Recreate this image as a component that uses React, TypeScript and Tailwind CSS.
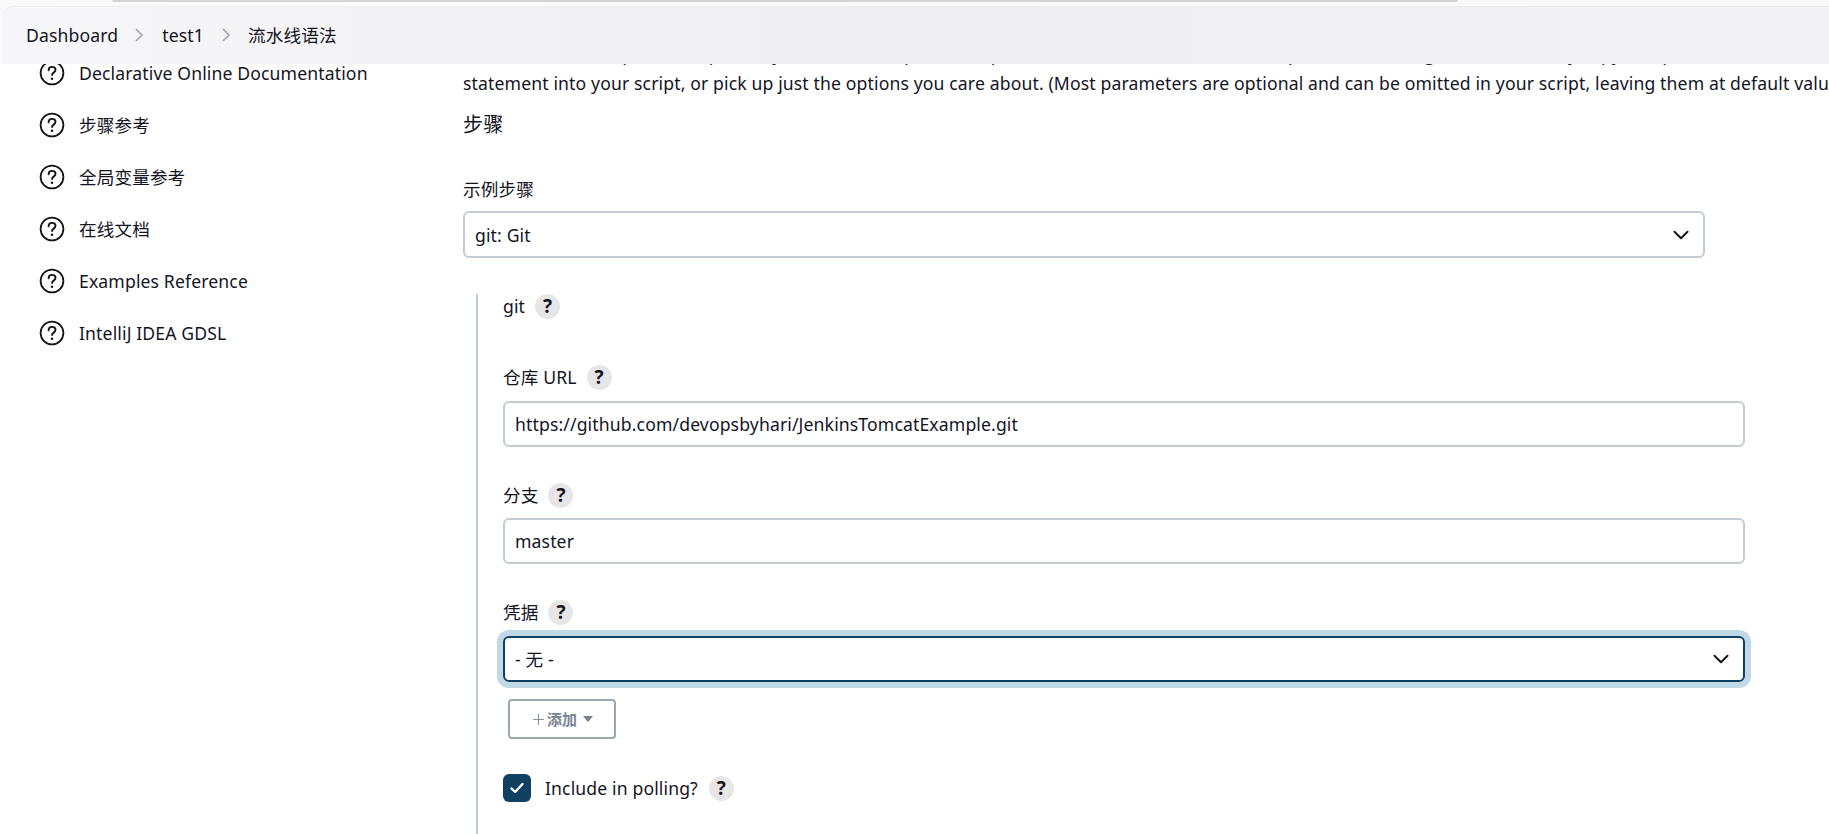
import React from "react";

const FONT = "font-['Noto_Sans','Noto_Sans_CJK_SC',sans-serif]";

function HelpCircle() {
  return (
    <svg width="26" height="26" viewBox="0 0 26 26" className="shrink-0">
      <circle cx="13" cy="13" r="11.4" fill="none" stroke="#14141f" strokeWidth="1.8" />
      <path d="M9.6 10.2c.1-2 1.5-3.3 3.5-3.3s3.4 1.2 3.4 2.9c0 1.4-.8 2.1-1.8 2.8-1 .7-1.6 1.2-1.6 2.5" fill="none" stroke="#14141f" strokeWidth="1.9" strokeLinecap="round" />
      <circle cx="13" cy="18.8" r="1.25" fill="#14141f" />
    </svg>
  );
}

function Badge() {
  return (
    <span className="w-[25px] h-[25px] rounded-full bg-[#e6e6e6] flex items-center justify-center shrink-0 text-[19px] leading-none font-bold text-[#14141f] tracking-normal">
      ?
    </span>
  );
}

function Chevron() {
  return (
    <svg width="16" height="16" viewBox="0 0 16 16">
      <path d="M1.5 4.5 8 11l6.5-6.5" fill="none" stroke="#14141f" strokeWidth="2" strokeLinecap="round" strokeLinejoin="round" transform="translate(0 .2)" />
    </svg>
  );
}

function Crumb() {
  return (
    <svg width="8" height="14" viewBox="0 0 8 14" className="shrink-0 block">
      <path d="M1 1 7 7l-6 6" fill="none" stroke="#a9a9b6" strokeWidth="1.7" />
    </svg>
  );
}

const sideItems = ["Declarative Online Documentation", "步骤参考", "全局变量参考", "在线文档", "Examples Reference", "IntelliJ IDEA GDSL"];

function FieldLabel({ text }: { text: string }) {
  return (
    <div className="flex items-center gap-[10px] h-[25px]">
      <span>{text}</span>
      <Badge />
    </div>
  );
}

function TextBox({ value, top }: { value: string; top: string }) {
  return (
    <div className={`${top} h-[46px] rounded-[6px] border-2 border-[#c3ccd1] flex items-center px-[10px]`}>
      {value}
    </div>
  );
}

export default function App() {
  return (
    <div className={`${FONT} relative h-[834px] w-full overflow-hidden bg-white text-[#14141f] text-[17.6px] tracking-[0.13px]`}>
      {/* sticky breadcrumb bar */}
      <div className="absolute inset-x-0 top-0 z-10 h-[64px] bg-[#f9f9f9]">
        <div className="absolute left-[112px] top-0 h-[2px] w-[1346px] rounded-b-[6px] bg-[#d5d5d5]" />
        <div className="absolute right-0 left-[3px] top-[6px] bottom-0 rounded-tl-[10px] border-t border-[#ececec] bg-gradient-to-r from-[#f7f7f9] via-[#eeeef1] to-[#f3f3f5] flex items-center pl-[23px] pb-[1px]">
          <span>Dashboard</span>
          <span className="ml-[17px] mr-[19px]"><Crumb /></span>
          <span>test1</span>
          <span className="ml-[18px] mr-[18px]"><Crumb /></span>
          <span>流水线语法</span>
        </div>
      </div>

      <div className="flex h-full">
        {/* sidebar */}
        <div className="w-[463px] shrink-0 pt-[47px] pl-[39px]">
          {sideItems.map((t) => (
            <div key={t} className="h-[52px] flex items-center gap-[14px]">
              <HelpCircle />
              <span>{t}</span>
            </div>
          ))}
        </div>

        {/* main */}
        <div className="flex-1 min-w-0 pt-[40px]">
          <div className="whitespace-nowrap leading-[29px]">
            <p>it, click Generate Pipeline Script, and you will see a Pipeline Script statement that would call the step with that configuration. You may copy and paste the whole</p>
            <p>statement into your script, or pick up just the options you care about. (Most parameters are optional and can be omitted in your script, leaving them at default values.)</p>
          </div>
          <div className="mt-[14px] leading-[26px] text-[20px]">步骤</div>
          <div className="mt-[38px] leading-[26px]">示例步骤</div>
          <div className="mt-[9px] w-[1242px] h-[47px] rounded-[6px] border-2 border-[#c3ccd1] flex items-center justify-between pl-[10px] pr-[14px]">
            <span className="pt-[1px]">git: Git</span>
            <Chevron />
          </div>

          <div className="mt-[36px] ml-[13px] border-l-2 border-[#c3ccd1] pl-[25px] w-[1269px] h-[600px]">
            <FieldLabel text="git" />
            <div className="mt-[46px]"><FieldLabel text="仓库 URL" /></div>
            <TextBox top="mt-[11px]" value="https://github.com/devopsbyhari/JenkinsTomcatExample.git" />
            <div className="mt-[36px]"><FieldLabel text="分支" /></div>
            <TextBox top="mt-[10px]" value="master" />
            <div className="mt-[36px]"><FieldLabel text="凭据" /></div>
            <div className="mt-[11px] h-[46px] rounded-[6px] border-2 border-[#0f4061] ring-[6px] ring-[#c1d8e6] flex items-center justify-between pl-[10px] pr-[14px]">
              <span>- 无 -</span>
              <Chevron />
            </div>
            <div className="mt-[17px] ml-[5px] w-[108px] h-[40px] rounded-[4px] border-2 border-[#9ba7af] flex items-center justify-center gap-[6px] pl-[2px] text-[15px] font-bold text-[#7a8494] tracking-normal">
              <span className="flex items-center gap-[3px]">
                <svg width="11" height="11" viewBox="0 0 11 11" className="shrink-0"><path d="M5.5 0v11M0 5.5h11" stroke="#8a93a0" strokeWidth="1.2" /></svg>
                添加
              </span>
              <svg width="10" height="6" viewBox="0 0 10 6"><path d="M0 0h10L5 6z" fill="#7a7f90" /></svg>
            </div>
            <div className="mt-[35px] flex items-center h-[28px]">
              <span className="w-[28px] h-[28px] rounded-[6px] bg-[#0f4061] flex items-center justify-center shrink-0">
                <svg width="16" height="14" viewBox="0 0 16 14"><path d="M2.5 7.5 6.2 11 13.5 3" fill="none" stroke="#fff" strokeWidth="2.4" strokeLinecap="round" strokeLinejoin="round" /></svg>
              </span>
              <span className="ml-[14px]">Include in polling?</span>
              <span className="ml-[11px]"><Badge /></span>
            </div>
          </div>
        </div>
      </div>
    </div>
  );
}
